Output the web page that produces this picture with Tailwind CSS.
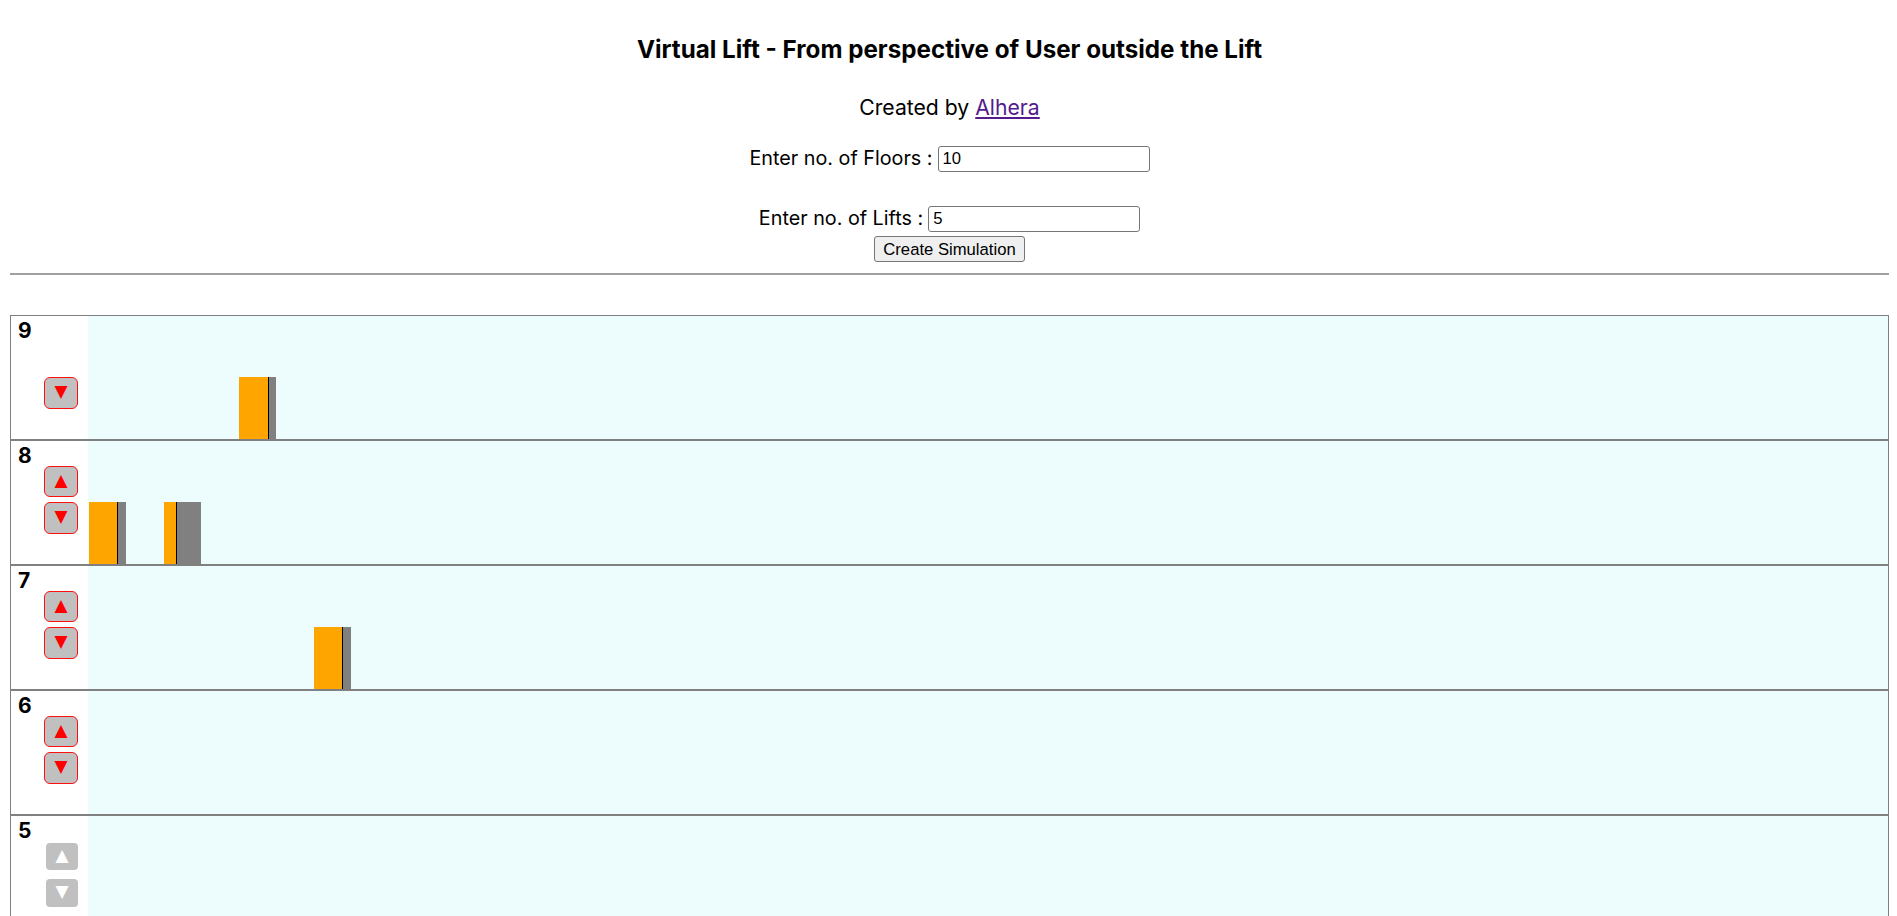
<!DOCTYPE html>
<html lang="en">
<head>
<meta charset="utf-8">
<title>Virtual Lift</title>
<script src="https://cdn.jsdelivr.net/npm/@tailwindcss/browser@4"></script>
</head>
<body class="bg-white text-black font-['Inter','Liberation_Sans',sans-serif]">
<div class="h-[916px] overflow-hidden pl-[10px] pr-[8px]">
  <header class="flex flex-col items-center">
    <h1 class="mt-[37px] h-[26px] leading-[26px] text-[24.2px] font-bold">Virtual Lift - From perspective of User outside the Lift</h1>
    <p class="mt-[31px] h-[26px] leading-[26px] text-[21.2px]">Created by <a href="#" class="text-[#551a8b] underline">Alhera</a></p>
    <div class="mt-[26px] flex items-center gap-[5px] h-[26px] text-[19.75px]">
      <span>Enter no. of Floors :</span>
      <input value="10" class="w-[212px] h-[26px] border border-[#767676] rounded-[3px] px-[4px] text-[16.67px] font-['Liberation_Sans',sans-serif]">
    </div>
    <div class="mt-[34px] flex items-center gap-[5px] h-[26px] text-[19.75px]">
      <span>Enter no. of Lifts :</span>
      <input value="5" class="w-[212px] h-[26px] border border-[#767676] rounded-[3px] px-[4px] text-[16.67px] font-['Liberation_Sans',sans-serif]">
    </div>
    <button class="mt-[4px] w-[151px] h-[26px] bg-[#efefef] border border-[#767676] rounded-[3px] text-[16.67px] whitespace-nowrap font-['Liberation_Sans',sans-serif]">Create Simulation</button>
  </header>
  <hr class="mt-[11px] h-[2px] border-0 bg-[#a0a0a0]">
  <main class="mt-[40px] border-l border-r border-[#808080] border-t">
    <section class="flex h-[125px] border-b-2 border-[#808080]">
      <div class="w-[77px] flex flex-col pl-[7px] pr-[10px]">
        <span class="h-[25px] pt-[5px] leading-[20px] text-[21px] font-bold">9</span>
        <div class="mt-[36px] flex flex-col items-end">
          <button class="w-[34px] h-[32px] pb-[3px] rounded-[6px] border border-[#ff1010] bg-[#c0c0c0] text-[#ff0000] text-[17px] leading-none font-['DejaVu_Sans',sans-serif]">▼</button>
        </div>
      </div>
      <div class="flex-1 bg-[#edfdfd] flex items-end pl-px gap-[38px]">
        <div class="w-[37px]"></div>
        <div class="w-[37px]"></div>
        <div class="w-[37px] h-[62px] flex">
          <div class="w-[29px] bg-[#ffa500]"></div>
          <div class="w-px bg-black"></div>
          <div class="flex-1 bg-[#808080]"></div>
        </div>
      </div>
    </section>
    <section class="flex h-[125px] border-b-2 border-[#808080]">
      <div class="w-[77px] flex flex-col pl-[7px] pr-[10px]">
        <span class="h-[25px] pt-[5px] leading-[20px] text-[21px] font-bold">8</span>
        <div class="flex flex-col items-end gap-[5px]">
          <button class="w-[34px] h-[31px] pb-[3px] rounded-[6px] border border-[#ff1010] bg-[#c0c0c0] text-[#ff0000] text-[17px] leading-none font-['DejaVu_Sans',sans-serif]">▲</button>
          <button class="w-[34px] h-[32px] pb-[3px] rounded-[6px] border border-[#ff1010] bg-[#c0c0c0] text-[#ff0000] text-[17px] leading-none font-['DejaVu_Sans',sans-serif]">▼</button>
        </div>
      </div>
      <div class="flex-1 bg-[#edfdfd] flex items-end pl-px gap-[38px]">
        <div class="w-[37px] h-[62px] flex">
          <div class="w-[28px] bg-[#ffa500]"></div>
          <div class="w-px bg-black"></div>
          <div class="flex-1 bg-[#808080]"></div>
        </div>
        <div class="w-[37px] h-[62px] flex">
          <div class="w-[12px] bg-[#ffa500]"></div>
          <div class="w-px bg-black"></div>
          <div class="flex-1 bg-[#808080]"></div>
        </div>
      </div>
    </section>
    <section class="flex h-[125px] border-b-2 border-[#808080]">
      <div class="w-[77px] flex flex-col pl-[7px] pr-[10px]">
        <span class="h-[25px] pt-[5px] leading-[20px] text-[21px] font-bold">7</span>
        <div class="flex flex-col items-end gap-[5px]">
          <button class="w-[34px] h-[31px] pb-[3px] rounded-[6px] border border-[#ff1010] bg-[#c0c0c0] text-[#ff0000] text-[17px] leading-none font-['DejaVu_Sans',sans-serif]">▲</button>
          <button class="w-[34px] h-[32px] pb-[3px] rounded-[6px] border border-[#ff1010] bg-[#c0c0c0] text-[#ff0000] text-[17px] leading-none font-['DejaVu_Sans',sans-serif]">▼</button>
        </div>
      </div>
      <div class="flex-1 bg-[#edfdfd] flex items-end pl-px gap-[38px]">
        <div class="w-[37px]"></div>
        <div class="w-[37px]"></div>
        <div class="w-[37px]"></div>
        <div class="w-[37px] h-[62px] flex">
          <div class="w-[28px] bg-[#ffa500]"></div>
          <div class="w-px bg-black"></div>
          <div class="flex-1 bg-[#808080]"></div>
        </div>
      </div>
    </section>
    <section class="flex h-[125px] border-b-2 border-[#808080]">
      <div class="w-[77px] flex flex-col pl-[7px] pr-[10px]">
        <span class="h-[25px] pt-[5px] leading-[20px] text-[21px] font-bold">6</span>
        <div class="flex flex-col items-end gap-[5px]">
          <button class="w-[34px] h-[31px] pb-[3px] rounded-[6px] border border-[#ff1010] bg-[#c0c0c0] text-[#ff0000] text-[17px] leading-none font-['DejaVu_Sans',sans-serif]">▲</button>
          <button class="w-[34px] h-[32px] pb-[3px] rounded-[6px] border border-[#ff1010] bg-[#c0c0c0] text-[#ff0000] text-[17px] leading-none font-['DejaVu_Sans',sans-serif]">▼</button>
        </div>
      </div>
      <div class="flex-1 bg-[#edfdfd]"></div>
    </section>
    <section class="flex h-[125px]">
      <div class="w-[77px] flex flex-col pl-[7px] pr-[10px]">
        <span class="h-[25px] pt-[5px] leading-[20px] text-[21px] font-bold">5</span>
        <div class="mt-[2px] flex flex-col items-end gap-[9px]">
          <button class="w-[32px] h-[27px] pb-[3px] rounded-[4px] bg-[#c0c0c0] text-white text-[17px] leading-none font-['DejaVu_Sans',sans-serif]">▲</button>
          <button class="w-[32px] h-[28px] pb-[3px] rounded-[4px] bg-[#c0c0c0] text-white text-[17px] leading-none font-['DejaVu_Sans',sans-serif]">▼</button>
        </div>
      </div>
      <div class="flex-1 bg-[#edfdfd]"></div>
    </section>
  </main>
</div>
</body>
</html>
